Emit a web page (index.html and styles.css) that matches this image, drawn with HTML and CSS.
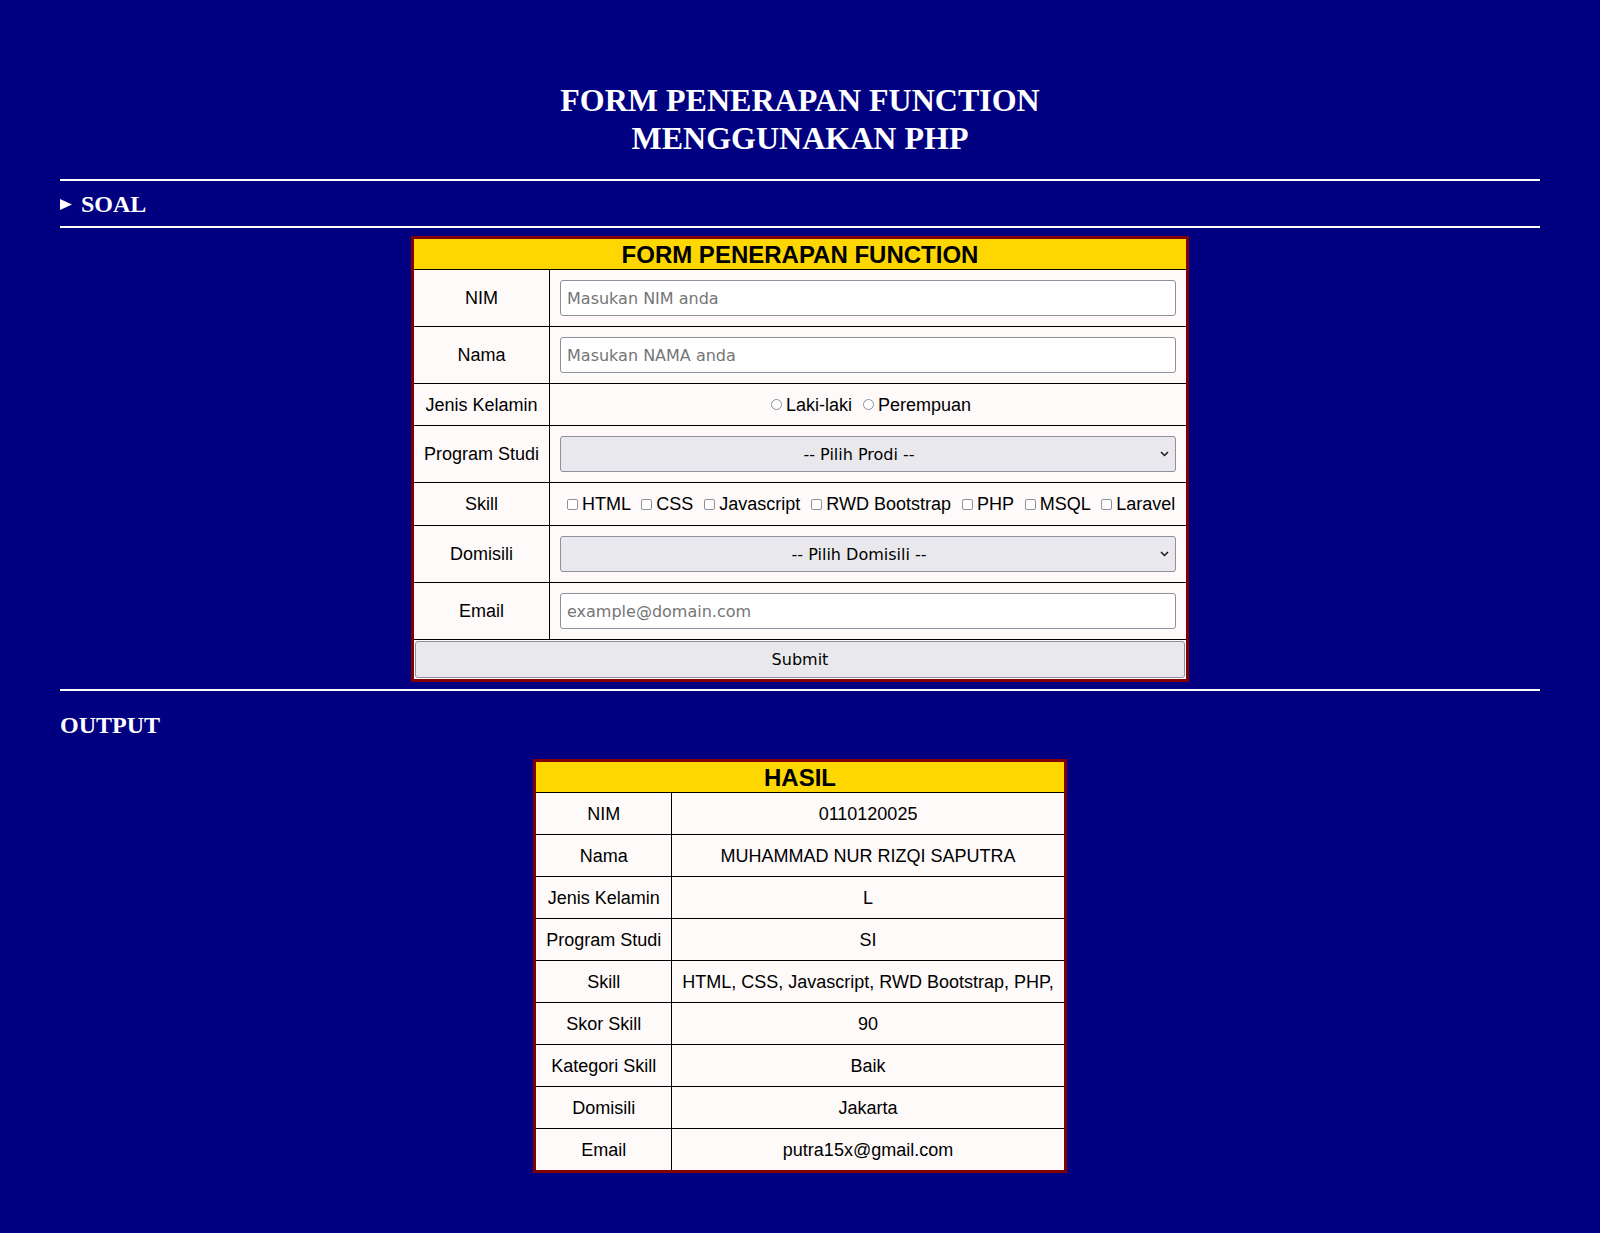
FILE: index.html
```html
<!DOCTYPE html>
<html lang="id">
<head>
  <meta charset="UTF-8">
  <meta name="viewport" content="width=device-width, initial-scale=1.0">
  <title>Form Penerapan Function</title>
  <link rel="stylesheet" href="styles.css">
</head>
<body>
  <div class="page">
    <h1 class="title">FORM PENERAPAN FUNCTION<br>MENGGUNAKAN PHP</h1>
    <hr class="line">

    <details class="soal">
      <summary>
        <svg class="arrow" width="12" height="11" viewBox="0 0 12 11"><polygon points="0,0 12,5.5 0,11" fill="#fff"/></svg>
        <h2>SOAL</h2>
      </summary>
    </details>
    <hr class="line">

    <form class="form" method="post" action="">
      <table class="tbl">
        <tr>
          <th colspan="2" class="tbl-head">FORM PENERAPAN FUNCTION</th>
        </tr>
        <tr>
          <td class="lbl">NIM</td>
          <td class="val"><input class="field" type="text" name="nim" placeholder="Masukan NIM anda"></td>
        </tr>
        <tr>
          <td class="lbl">Nama</td>
          <td class="val"><input class="field" type="text" name="nama" placeholder="Masukan NAMA anda"></td>
        </tr>
        <tr class="row-text">
          <td class="lbl">Jenis Kelamin</td>
          <td class="val">
            <input class="radio" type="radio" name="jk" id="jk_l" value="L"><label for="jk_l">Laki-laki</label>
            <input class="radio" type="radio" name="jk" id="jk_p" value="P"><label for="jk_p">Perempuan</label>
          </td>
        </tr>
        <tr>
          <td class="lbl">Program Studi</td>
          <td class="val">
            <div class="select-wrap">
              <select class="field field-select" name="prodi">
                <option value="">-- Pilih Prodi --</option>
                <option value="SI">Sistem Informasi</option>
                <option value="TI">Teknik Informatika</option>
              </select>
              <svg class="chevron" width="9" height="6" viewBox="0 0 9 6"><polyline points="1,1 4.5,4.5 8,1" fill="none" stroke="#1a1a1a" stroke-width="1.5"/></svg>
            </div>
          </td>
        </tr>
        <tr>
          <td class="lbl">Skill</td>
          <td class="val val-check"><input class="check" type="checkbox" name="skill[]" id="sk1" value="HTML"><label for="sk1">HTML</label>
            <input class="check" type="checkbox" name="skill[]" id="sk2" value="CSS"><label for="sk2">CSS</label>
            <input class="check" type="checkbox" name="skill[]" id="sk3" value="Javascript"><label for="sk3">Javascript</label>
            <input class="check" type="checkbox" name="skill[]" id="sk4" value="RWD Bootstrap"><label for="sk4">RWD Bootstrap</label>
            <input class="check" type="checkbox" name="skill[]" id="sk5" value="PHP"><label for="sk5">PHP</label>
            <input class="check" type="checkbox" name="skill[]" id="sk6" value="MSQL"><label for="sk6">MSQL</label>
            <input class="check" type="checkbox" name="skill[]" id="sk7" value="Laravel"><label for="sk7">Laravel</label></td>
        </tr>
        <tr>
          <td class="lbl">Domisili</td>
          <td class="val">
            <div class="select-wrap">
              <select class="field field-select" name="domisili">
                <option value="">-- Pilih Domisili --</option>
                <option value="Jakarta">Jakarta</option>
                <option value="Bandung">Bandung</option>
                <option value="Bekasi">Bekasi</option>
              </select>
              <svg class="chevron" width="9" height="6" viewBox="0 0 9 6"><polyline points="1,1 4.5,4.5 8,1" fill="none" stroke="#1a1a1a" stroke-width="1.5"/></svg>
            </div>
          </td>
        </tr>
        <tr>
          <td class="lbl">Email</td>
          <td class="val"><input class="field" type="email" name="email" placeholder="example@domain.com"></td>
        </tr>
        <tr>
          <td colspan="2" class="submit-cell"><button class="btn" type="submit" name="proses">Submit</button></td>
        </tr>
      </table>
    </form>
    <hr class="line">

    <h2 class="section">OUTPUT</h2>

    <table class="tbl tbl-result">
      <tr>
        <th colspan="2" class="tbl-head">HASIL</th>
      </tr>
      <tr><td class="lbl">NIM</td><td>0110120025</td></tr>
      <tr><td class="lbl">Nama</td><td>MUHAMMAD NUR RIZQI SAPUTRA</td></tr>
      <tr><td class="lbl">Jenis Kelamin</td><td>L</td></tr>
      <tr><td class="lbl">Program Studi</td><td>SI</td></tr>
      <tr><td class="lbl">Skill</td><td>HTML, CSS, Javascript, RWD Bootstrap, PHP,</td></tr>
      <tr><td class="lbl">Skor Skill</td><td>90</td></tr>
      <tr><td class="lbl">Kategori Skill</td><td>Baik</td></tr>
      <tr><td class="lbl">Domisili</td><td>Jakarta</td></tr>
      <tr><td class="lbl">Email</td><td>putra15x@gmail.com</td></tr>
    </table>
  </div>
</body>
</html>
```

FILE: styles.css
```css
html {
  background: #000080;
}
body {
  margin: 0;
  background: #000080;
  color: #fff;
  font-family: "Liberation Serif", "Times New Roman", serif;
}
.page {
  padding: 60px 60px 40px;
}
.title {
  margin: 21px 0 22px;
  font-size: 32px;
  line-height: 38px;
  text-align: center;
}
.line {
  margin: 0;
  height: 0;
  border: 0;
  border-top: 2px solid #fff;
}
.soal summary {
  display: flex;
  align-items: center;
  gap: 9px;
  padding: 9px 0 8px;
  list-style: none;
  cursor: pointer;
}
.soal summary::-webkit-details-marker {
  display: none;
}
.soal h2 {
  margin: 0;
  font-size: 24px;
  line-height: 28px;
}
.form {
  margin: 8px 0 7px;
}
.section {
  margin: 20px 0;
  font-size: 24px;
  line-height: 28px;
}
.tbl {
  margin: 0 auto;
  border-collapse: collapse;
  border: 3px solid #800000;
  color: #000;
  font-family: "Liberation Sans", Arial, sans-serif;
  font-size: 18px;
}
.tbl-head {
  background: #ffd700;
  border: 1px solid #000;
  padding: 2px 1px 0;
  font-size: 24px;
  font-weight: bold;
}
.tbl td {
  background: #fffafa;
  border: 1px solid #000;
  padding: 10px;
  text-align: center;
  white-space: nowrap;
}
.tbl .row-text td,
.tbl-result td {
  padding: 11px 10px 9px;
}
.tbl .val {
  width: 616px;
}
.tbl .val-check {
  height: 22px;
}
.field {
  display: block;
  width: 100%;
  height: 36px;
  box-sizing: border-box;
  margin: 0;
  padding: 0 6px;
  border: 1px solid #8f8f9d;
  border-radius: 3px;
  background: #fff;
  color: #000;
  font-family: "DejaVu Sans", sans-serif;
  font-size: 16px;
}
.field::placeholder {
  color: #757575;
}
.select-wrap {
  position: relative;
}
.field-select {
  appearance: none;
  -webkit-appearance: none;
  padding: 0 24px 0 6px;
  background: #e9e9ed;
  text-align: center;
  text-align-last: center;
}
.chevron {
  position: absolute;
  right: 7px;
  top: 15px;
  pointer-events: none;
}
.check {
  appearance: none;
  -webkit-appearance: none;
  width: 11px;
  height: 11px;
  margin: 4px 4px 0 6px;
  border: 1px solid #8f8f9d;
  border-radius: 2px;
  background: #fff;
  vertical-align: baseline;
}
.radio {
  appearance: none;
  -webkit-appearance: none;
  width: 11px;
  height: 11px;
  margin: 4px 4px 1px 6px;
  border: 1px solid #8f8f9d;
  border-radius: 50%;
  background: #fff;
  vertical-align: baseline;
}
.tbl .submit-cell {
  padding: 1px;
}
.btn {
  display: block;
  width: 100%;
  height: 37px;
  border: 1px solid #8f8f9d;
  border-radius: 3px;
  background: #e9e9ed;
  color: #000;
  font-family: "DejaVu Sans", sans-serif;
  font-size: 16px;
}
```
